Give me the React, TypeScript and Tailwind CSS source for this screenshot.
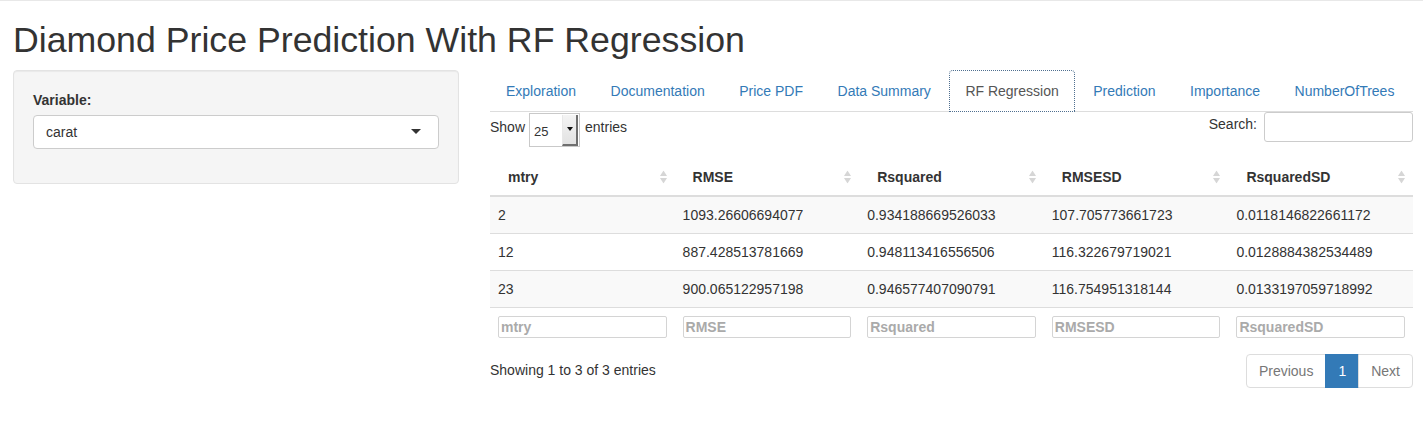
import React from 'react'

const tabs = [
  'Exploration',
  'Documentation',
  'Price PDF',
  'Data Summary',
  'RF Regression',
  'Prediction',
  'Importance',
  'NumberOfTrees',
]

const columns = ['mtry', 'RMSE', 'Rsquared', 'RMSESD', 'RsquaredSD']

const rows = [
  ['2', '1093.26606694077', '0.934188669526033', '107.705773661723', '0.0118146822661172'],
  ['12', '887.428513781669', '0.948113416556506', '116.322679719021', '0.0128884382534489'],
  ['23', '900.065122957198', '0.946577407090791', '116.754951318144', '0.0133197059718992'],
]

function SortIcon() {
  return (
    <svg width="7" height="13" viewBox="0 0 7 13" className="absolute right-[8px] top-1/2 -translate-y-1/2">
      <path d="M3.5 0 L7 5.5 L0 5.5 Z" fill="#d6d6d6" />
      <path d="M0 7.5 L7 7.5 L3.5 13 Z" fill="#d6d6d6" />
    </svg>
  )
}

export default function App() {
  return (
    <div className="min-h-screen bg-white text-[14px] leading-[20px] text-[#333] font-['Liberation_Sans',Arial,sans-serif]">
      <div className="h-px bg-[#e8e8e8]" />
      <div className="pl-[13px]">
        {/* Title */}
        <h1 className="mt-[20px] mb-[10px] text-[35.7px] leading-[39px] font-normal">
          Diamond Price Prediction With RF Regression
        </h1>

        <div className="flex items-start">
          {/* Sidebar */}
          <div className="w-[446px] shrink-0 rounded-[4px] border border-[#e3e3e3] bg-[#f5f5f5] p-[19px] shadow-[inset_0_1px_1px_rgba(0,0,0,0.05)]">
            <div className="mb-[15px]">
              <label className="mb-[5px] block font-bold">Variable:</label>
              <div className="relative flex h-[34px] items-center rounded-[4px] border border-[#ccc] bg-white px-[12px]">
                <span>carat</span>
                <span className="absolute right-[17px] top-1/2 -mt-[3px] h-0 w-0 border-x-[5px] border-t-[5px] border-x-transparent border-t-[#333]" />
              </div>
            </div>
          </div>

          {/* Main panel */}
          <div className="ml-[31px] w-[923px] shrink-0">
            {/* Tabs */}
            <ul className="flex border-b border-[#ddd]">
              {tabs.map((t) => {
                const active = t === 'RF Regression'
                return (
                  <li key={t} className="-mb-px mr-[2.5px] shrink-0 whitespace-nowrap">
                    <a
                      className={
                        active
                          ? 'block rounded-t-[4px] border border-dotted border-[#4f6f8f] bg-white px-[15px] py-[10px] text-[#555]'
                          : 'block rounded-t-[4px] border border-transparent px-[15px] py-[10px] text-[#337ab7]'
                      }
                    >
                      {t}
                    </a>
                  </li>
                )
              })}
            </ul>

            {/* Controls */}
            <div className="flex h-[41px] items-start justify-between">
              <div className="flex items-start">
                <span className="pt-[5px]">Show</span>
                <div className="ml-[4px] mt-px flex h-[34px] w-[51px] items-center justify-between border border-[#c9c9c9] bg-white">
                  <span className="pl-[4px] pt-[3px] text-[13px]">25</span>
                  <span className="mr-px flex h-[31px] w-[16px] items-center justify-center border-b-2 border-r-2 border-l border-b-[#6f6f6f] border-r-[#6f6f6f] border-l-[#e8e8e8] bg-gradient-to-b from-[#f4f4f4] to-[#e2e2e2]">
                    <span className="h-0 w-0 border-x-[3px] border-t-[4px] border-x-transparent border-t-[#111]" />
                  </span>
                </div>
                <span className="ml-[5px] pt-[5px]">entries</span>
              </div>
              <div className="flex items-start">
                <span className="pt-[2px]">Search:</span>
                <div className="ml-[7px] h-[30px] w-[149px] rounded-[3px] border border-[#ccc] bg-white" />
              </div>
            </div>

            {/* Table */}
            <table className="mt-[6px] w-full table-fixed border-collapse">
              <thead>
                <tr>
                  {columns.map((c) => (
                    <th
                      key={c}
                      className="relative border-b-2 border-[#ddd] py-[8px] pl-[18px] pr-[30px] text-left font-bold"
                    >
                      {c}
                      <SortIcon />
                    </th>
                  ))}
                </tr>
              </thead>
              <tbody>
                {rows.map((r, i) => (
                  <tr key={i} className={i % 2 === 0 ? 'bg-[#f9f9f9]' : 'bg-white'}>
                    {r.map((v, j) => (
                      <td key={j} className="border-t border-[#ddd] px-[8px] py-[8px]">
                        {v}
                      </td>
                    ))}
                  </tr>
                ))}
              </tbody>
              <tfoot>
                <tr>
                  {columns.map((c) => (
                    <td key={c} className="border-t border-[#ddd] px-[8px] py-[8px]">
                      <div className="flex h-[22px] w-full items-center rounded-[2px] border border-[#d4d4d4] px-[2px] font-bold text-[#aaa]">
                        {c}
                      </div>
                    </td>
                  ))}
                </tr>
              </tfoot>
            </table>

            {/* Footer */}
            <div className="mt-[6px] flex items-start justify-between">
              <div className="pt-[8px]">Showing 1 to 3 of 3 entries</div>
              <div className="mt-[2px] flex">
                <span className="rounded-l-[4px] border border-[#ddd] px-[12px] py-[6px] text-[#777]">Previous</span>
                <span className="-ml-px border border-[#337ab7] bg-[#337ab7] px-[12px] py-[6px] text-white">1</span>
                <span className="-ml-px rounded-r-[4px] border border-[#ddd] px-[12px] py-[6px] text-[#777]">Next</span>
              </div>
            </div>
          </div>
        </div>
      </div>
    </div>
  )
}
